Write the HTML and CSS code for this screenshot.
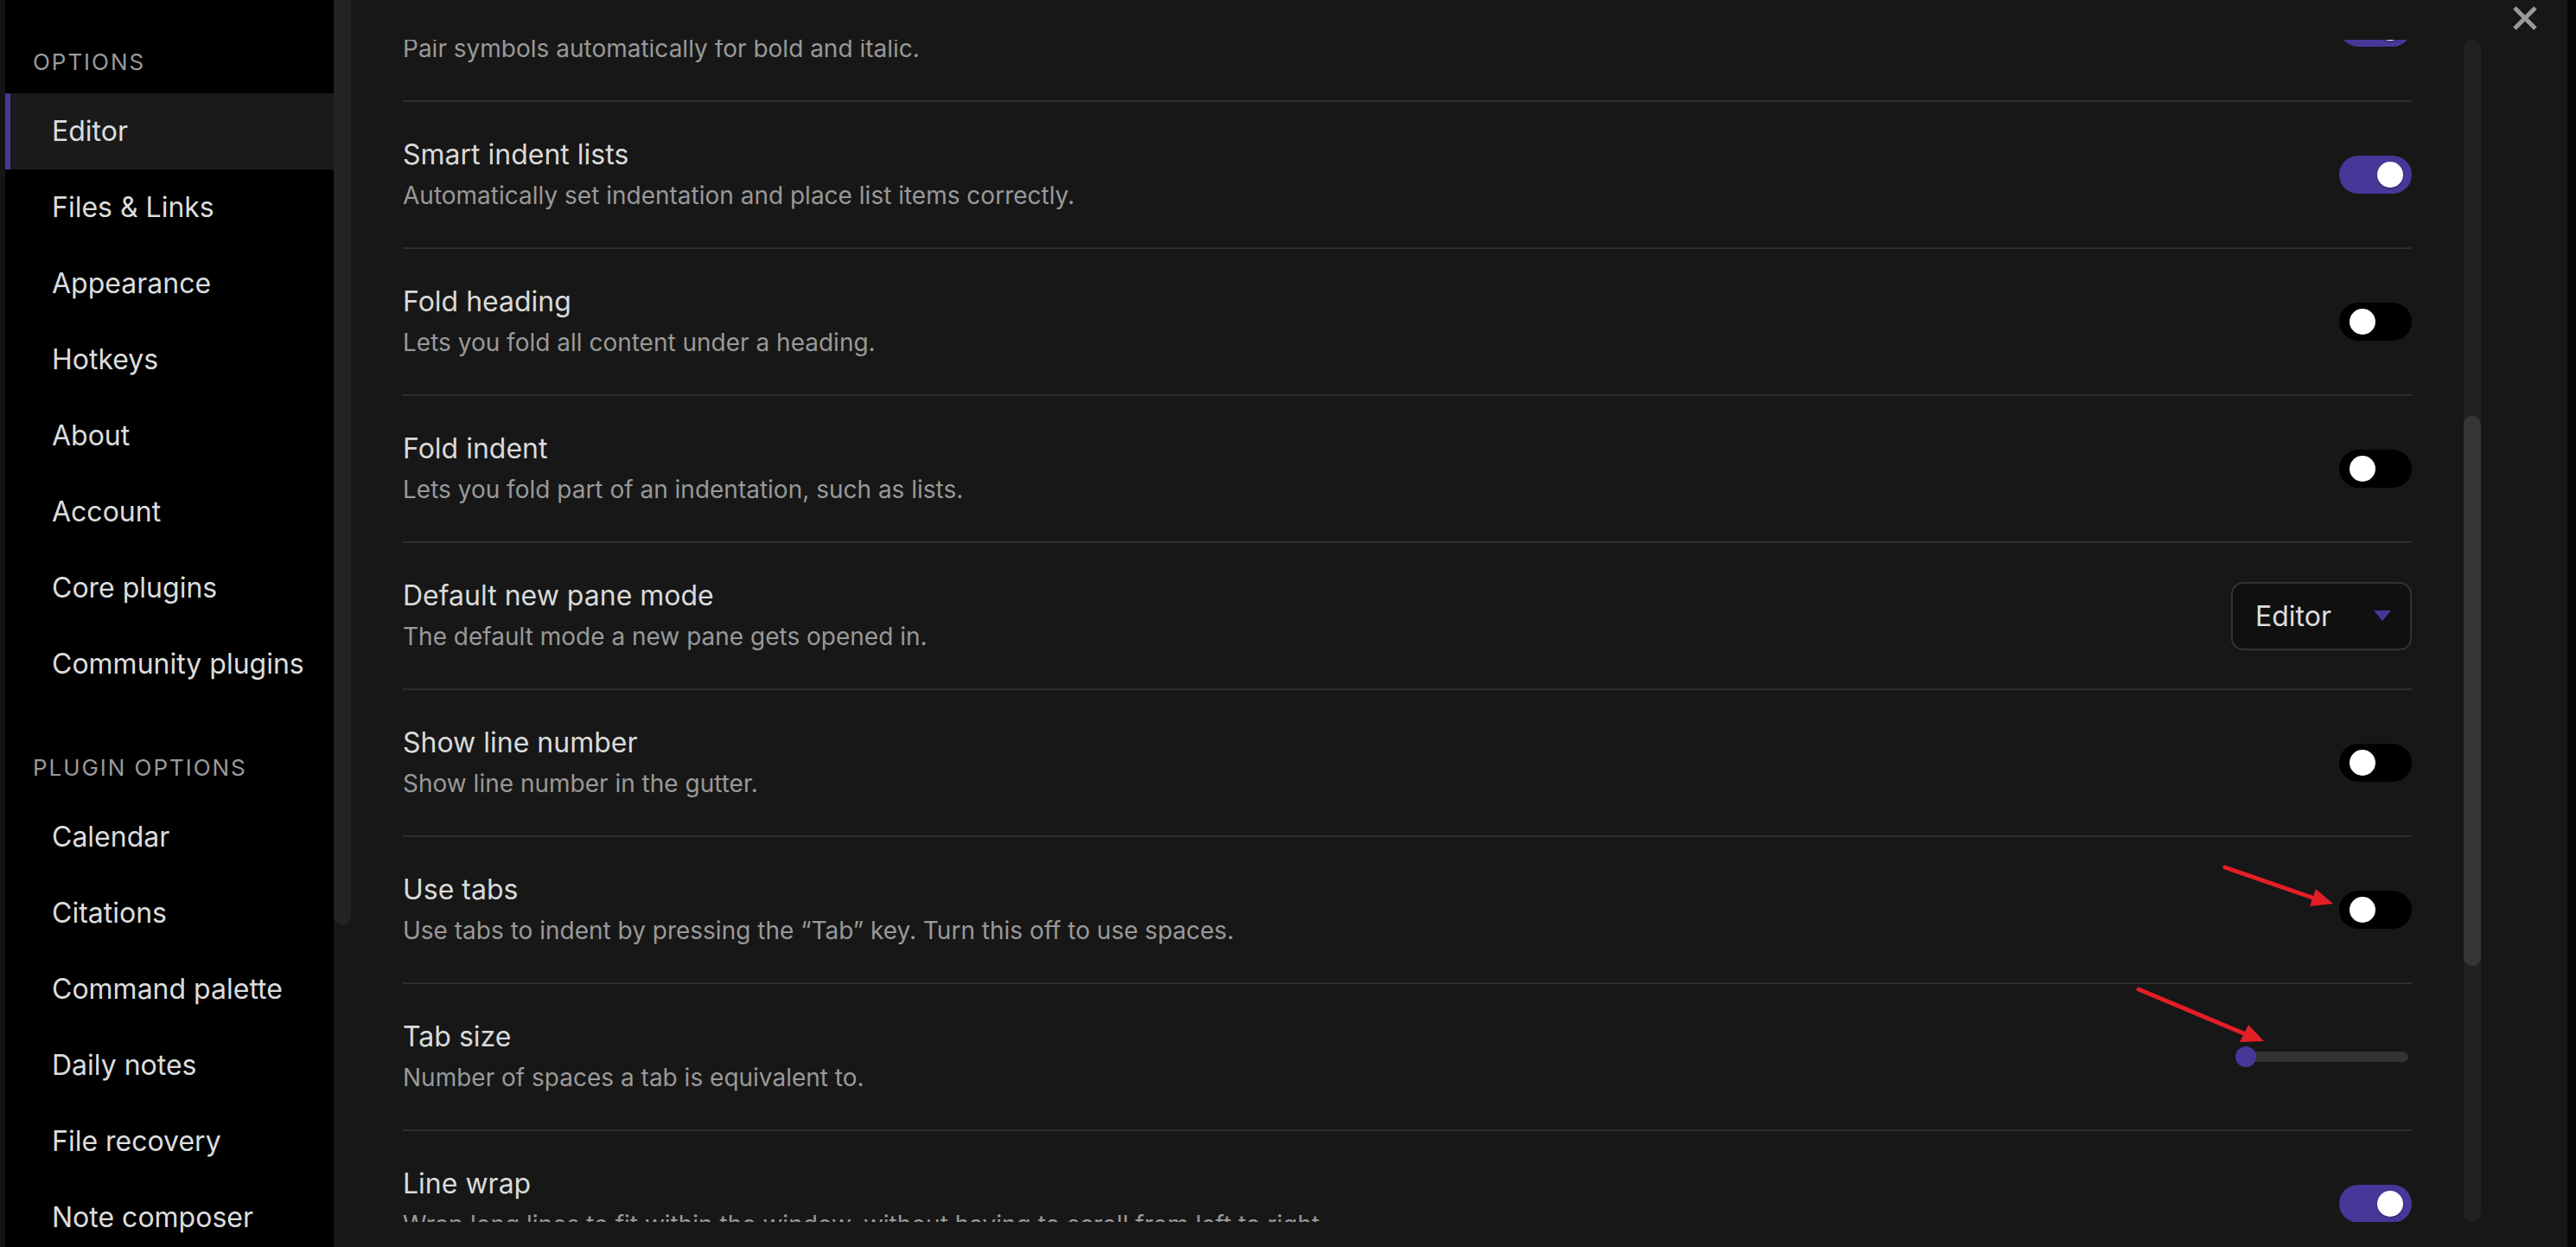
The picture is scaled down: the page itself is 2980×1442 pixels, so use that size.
FILE: index.html
```html
<!DOCTYPE html>
<html lang="en">
<head>
<meta charset="utf-8">
<title>Settings</title>
<link rel="stylesheet" href="styles.css">
</head>
<body>
<div class="app">
  <div class="backdrop-left"></div>
  <div class="modal">
    <nav class="sidebar">
      <div class="group">
        <div class="group-title">Options</div>
        <div class="nav-item active">Editor</div>
        <div class="nav-item">Files &amp; Links</div>
        <div class="nav-item">Appearance</div>
        <div class="nav-item">Hotkeys</div>
        <div class="nav-item">About</div>
        <div class="nav-item">Account</div>
        <div class="nav-item">Core plugins</div>
        <div class="nav-item">Community plugins</div>
      </div>
      <div class="group">
        <div class="group-title">Plugin options</div>
        <div class="nav-item">Calendar</div>
        <div class="nav-item">Citations</div>
        <div class="nav-item">Command palette</div>
        <div class="nav-item">Daily notes</div>
        <div class="nav-item">File recovery</div>
        <div class="nav-item">Note composer</div>
      </div>
    </nav>
    <div class="side-scroll"><div class="side-thumb"></div></div>
    <main class="content">
      <div class="scroll-area">
        <div class="settings">
          <div class="setting">
            <div class="info">
              <div class="name">Auto pair Markdown syntax</div>
              <div class="desc">Pair symbols automatically for bold and italic.</div>
            </div>
            <div class="toggle on"><span class="knob"></span></div>
          </div>
          <div class="setting">
            <div class="info">
              <div class="name">Smart indent lists</div>
              <div class="desc">Automatically set indentation and place list items correctly.</div>
            </div>
            <div class="toggle on"><span class="knob"></span></div>
          </div>
          <div class="setting">
            <div class="info">
              <div class="name">Fold heading</div>
              <div class="desc">Lets you fold all content under a heading.</div>
            </div>
            <div class="toggle"><span class="knob"></span></div>
          </div>
          <div class="setting">
            <div class="info">
              <div class="name">Fold indent</div>
              <div class="desc">Lets you fold part of an indentation, such as lists.</div>
            </div>
            <div class="toggle"><span class="knob"></span></div>
          </div>
          <div class="setting">
            <div class="info">
              <div class="name">Default new pane mode</div>
              <div class="desc">The default mode a new pane gets opened in.</div>
            </div>
            <div class="dropdown">
              <span class="dropdown-label">Editor</span>
              <svg class="caret" width="20" height="12" viewBox="0 0 20 12"><path d="M0 0 H20 L10 12 Z" fill="#483699"/></svg>
            </div>
          </div>
          <div class="setting">
            <div class="info">
              <div class="name">Show line number</div>
              <div class="desc">Show line number in the gutter.</div>
            </div>
            <div class="toggle"><span class="knob"></span></div>
          </div>
          <div class="setting">
            <div class="info">
              <div class="name">Use tabs</div>
              <div class="desc">Use tabs to indent by pressing the “Tab” key. Turn this off to use spaces.</div>
            </div>
            <div class="toggle"><span class="knob"></span></div>
          </div>
          <div class="setting">
            <div class="info">
              <div class="name">Tab size</div>
              <div class="desc">Number of spaces a tab is equivalent to.</div>
            </div>
            <div class="slider"><span class="slider-track"></span><span class="slider-thumb"></span></div>
          </div>
          <div class="setting">
            <div class="info">
              <div class="name">Line wrap</div>
              <div class="desc">Wrap long lines to fit within the window, without having to scroll from left to right.</div>
            </div>
            <div class="toggle on"><span class="knob"></span></div>
          </div>
        </div>
      </div>
      <div class="vscroll"><div class="vthumb"></div></div>
    </main>
    <div class="modal-gutter"></div>
    <div class="close" aria-label="Close">
      <svg width="28" height="28" viewBox="0 0 28 28"><path d="M2 2 L26 26 M26 2 L2 26" stroke="#9a9a9a" stroke-width="5" fill="none"/></svg>
    </div>
  </div>
  <div class="backdrop-right"></div>
</div>
<svg class="annotations" width="2980" height="1442" viewBox="0 0 2980 1442">
  <line x1="2574" y1="1003" x2="2678" y2="1039" stroke="#e41e26" stroke-width="5" stroke-linecap="round"/>
  <polygon points="2679,1028 2699,1045 2672,1048" fill="#e41e26"/>
  <line x1="2474" y1="1144" x2="2598" y2="1196" stroke="#e41e26" stroke-width="5" stroke-linecap="round"/>
  <polygon points="2601,1185 2619,1204 2591,1205" fill="#e41e26"/>
</svg>
</body>
</html>
```

FILE: styles.css
```css
html, body {
  margin: 0;
  padding: 0;
  background: #000;
}

body {
  font-family: Inter, "Noto Sans", sans-serif;
  width: 2980px;
  height: 1442px;
  overflow: hidden;
  position: relative;
  -webkit-font-smoothing: antialiased;
}

.app {
  display: flex;
  width: 2980px;
  height: 1442px;
}

.backdrop-left {
  width: 6px;
  flex: none;
  background: #141414;
}

.backdrop-right {
  width: 10px;
  flex: none;
  background: #050505;
}

.modal {
  flex: 1;
  display: flex;
  position: relative;
  background: #171717;
  min-width: 0;
}

/* Sidebar */
.sidebar {
  width: 380px;
  flex: none;
  background: #000;
  overflow: hidden;
}

.group + .group {
  margin-top: 4px;
}

.group-title {
  padding: 54px 0 18px 32px;
  font-size: 26px;
  line-height: 36px;
  letter-spacing: 0.075em;
  text-transform: uppercase;
  color: #9a9a9a;
}

.nav-item {
  height: 88px;
  line-height: 88px;
  padding-left: 54px;
  font-size: 32px;
  color: #dcddde;
  white-space: nowrap;
}

.nav-item.active {
  background: #1a1a1a;
  box-shadow: inset 6px 0 0 #483699;
}

.side-scroll {
  width: 20px;
  flex: none;
  background: #171717;
}

.side-thumb {
  height: 1070px;
  background: #232323;
  border-radius: 0 0 10px 10px;
}

/* Content */
.content {
  flex: 1;
  display: flex;
  padding: 46px 0 29px;
  min-width: 0;
}

.scroll-area {
  flex: 1;
  overflow: hidden;
  padding: 0 60px;
}

.settings {
  margin-top: -100px;
}

.setting {
  display: flex;
  align-items: center;
  gap: 40px;
  height: 170px;
  box-sizing: border-box;
  border-top: 2px solid #2e2e2e;
}

.info {
  flex: 1;
  min-width: 0;
}

.name {
  font-size: 32px;
  line-height: 44px;
  color: #dadada;
}

.desc {
  font-size: 28px;
  line-height: 42px;
  margin-top: 4px;
  color: #999;
  white-space: nowrap;
}

/* Toggle */
.toggle {
  position: relative;
  width: 84px;
  height: 44px;
  border-radius: 22px;
  background: #000;
  flex: none;
}

.toggle.on {
  background: #483699;
}

.knob {
  position: absolute;
  top: 7px;
  left: 12px;
  width: 30px;
  height: 30px;
  border-radius: 50%;
  background: #fff;
  box-shadow: 0 1px 2px rgba(0, 0, 0, 0.35);
}

.toggle.on .knob {
  left: 44px;
}

/* Dropdown */
.dropdown {
  flex: none;
  width: 209px;
  height: 79px;
  box-sizing: border-box;
  border: 2px solid #333;
  border-radius: 14px;
  background: #101010;
  display: flex;
  align-items: center;
  justify-content: space-between;
  padding: 0 22px 0 26px;
}

.dropdown-label {
  font-size: 32px;
  color: #dcddde;
}

.caret {
  display: block;
}

/* Slider */
.slider {
  flex: none;
  position: relative;
  width: 200px;
  height: 24px;
  margin-right: 4px;
}

.slider-track {
  position: absolute;
  left: 0;
  right: 0;
  top: 6px;
  height: 12px;
  border-radius: 6px;
  background: #333;
}

.slider-thumb {
  position: absolute;
  left: 0;
  top: 0;
  width: 24px;
  height: 24px;
  border-radius: 50%;
  background: #483699;
}

/* Main scrollbar */
.vscroll {
  width: 20px;
  flex: none;
  background: #212121;
  border-radius: 10px;
  display: flex;
  flex-direction: column;
}

.vthumb {
  margin-top: 435px;
  height: 636px;
  border-radius: 10px;
  background: #363636;
}

.modal-gutter {
  width: 100px;
  flex: none;
}

.close {
  position: absolute;
  top: 7px;
  right: 35px;
  width: 28px;
  height: 28px;
}

.close svg {
  display: block;
}

.annotations {
  position: absolute;
  top: 0;
  left: 0;
  pointer-events: none;
}
```
